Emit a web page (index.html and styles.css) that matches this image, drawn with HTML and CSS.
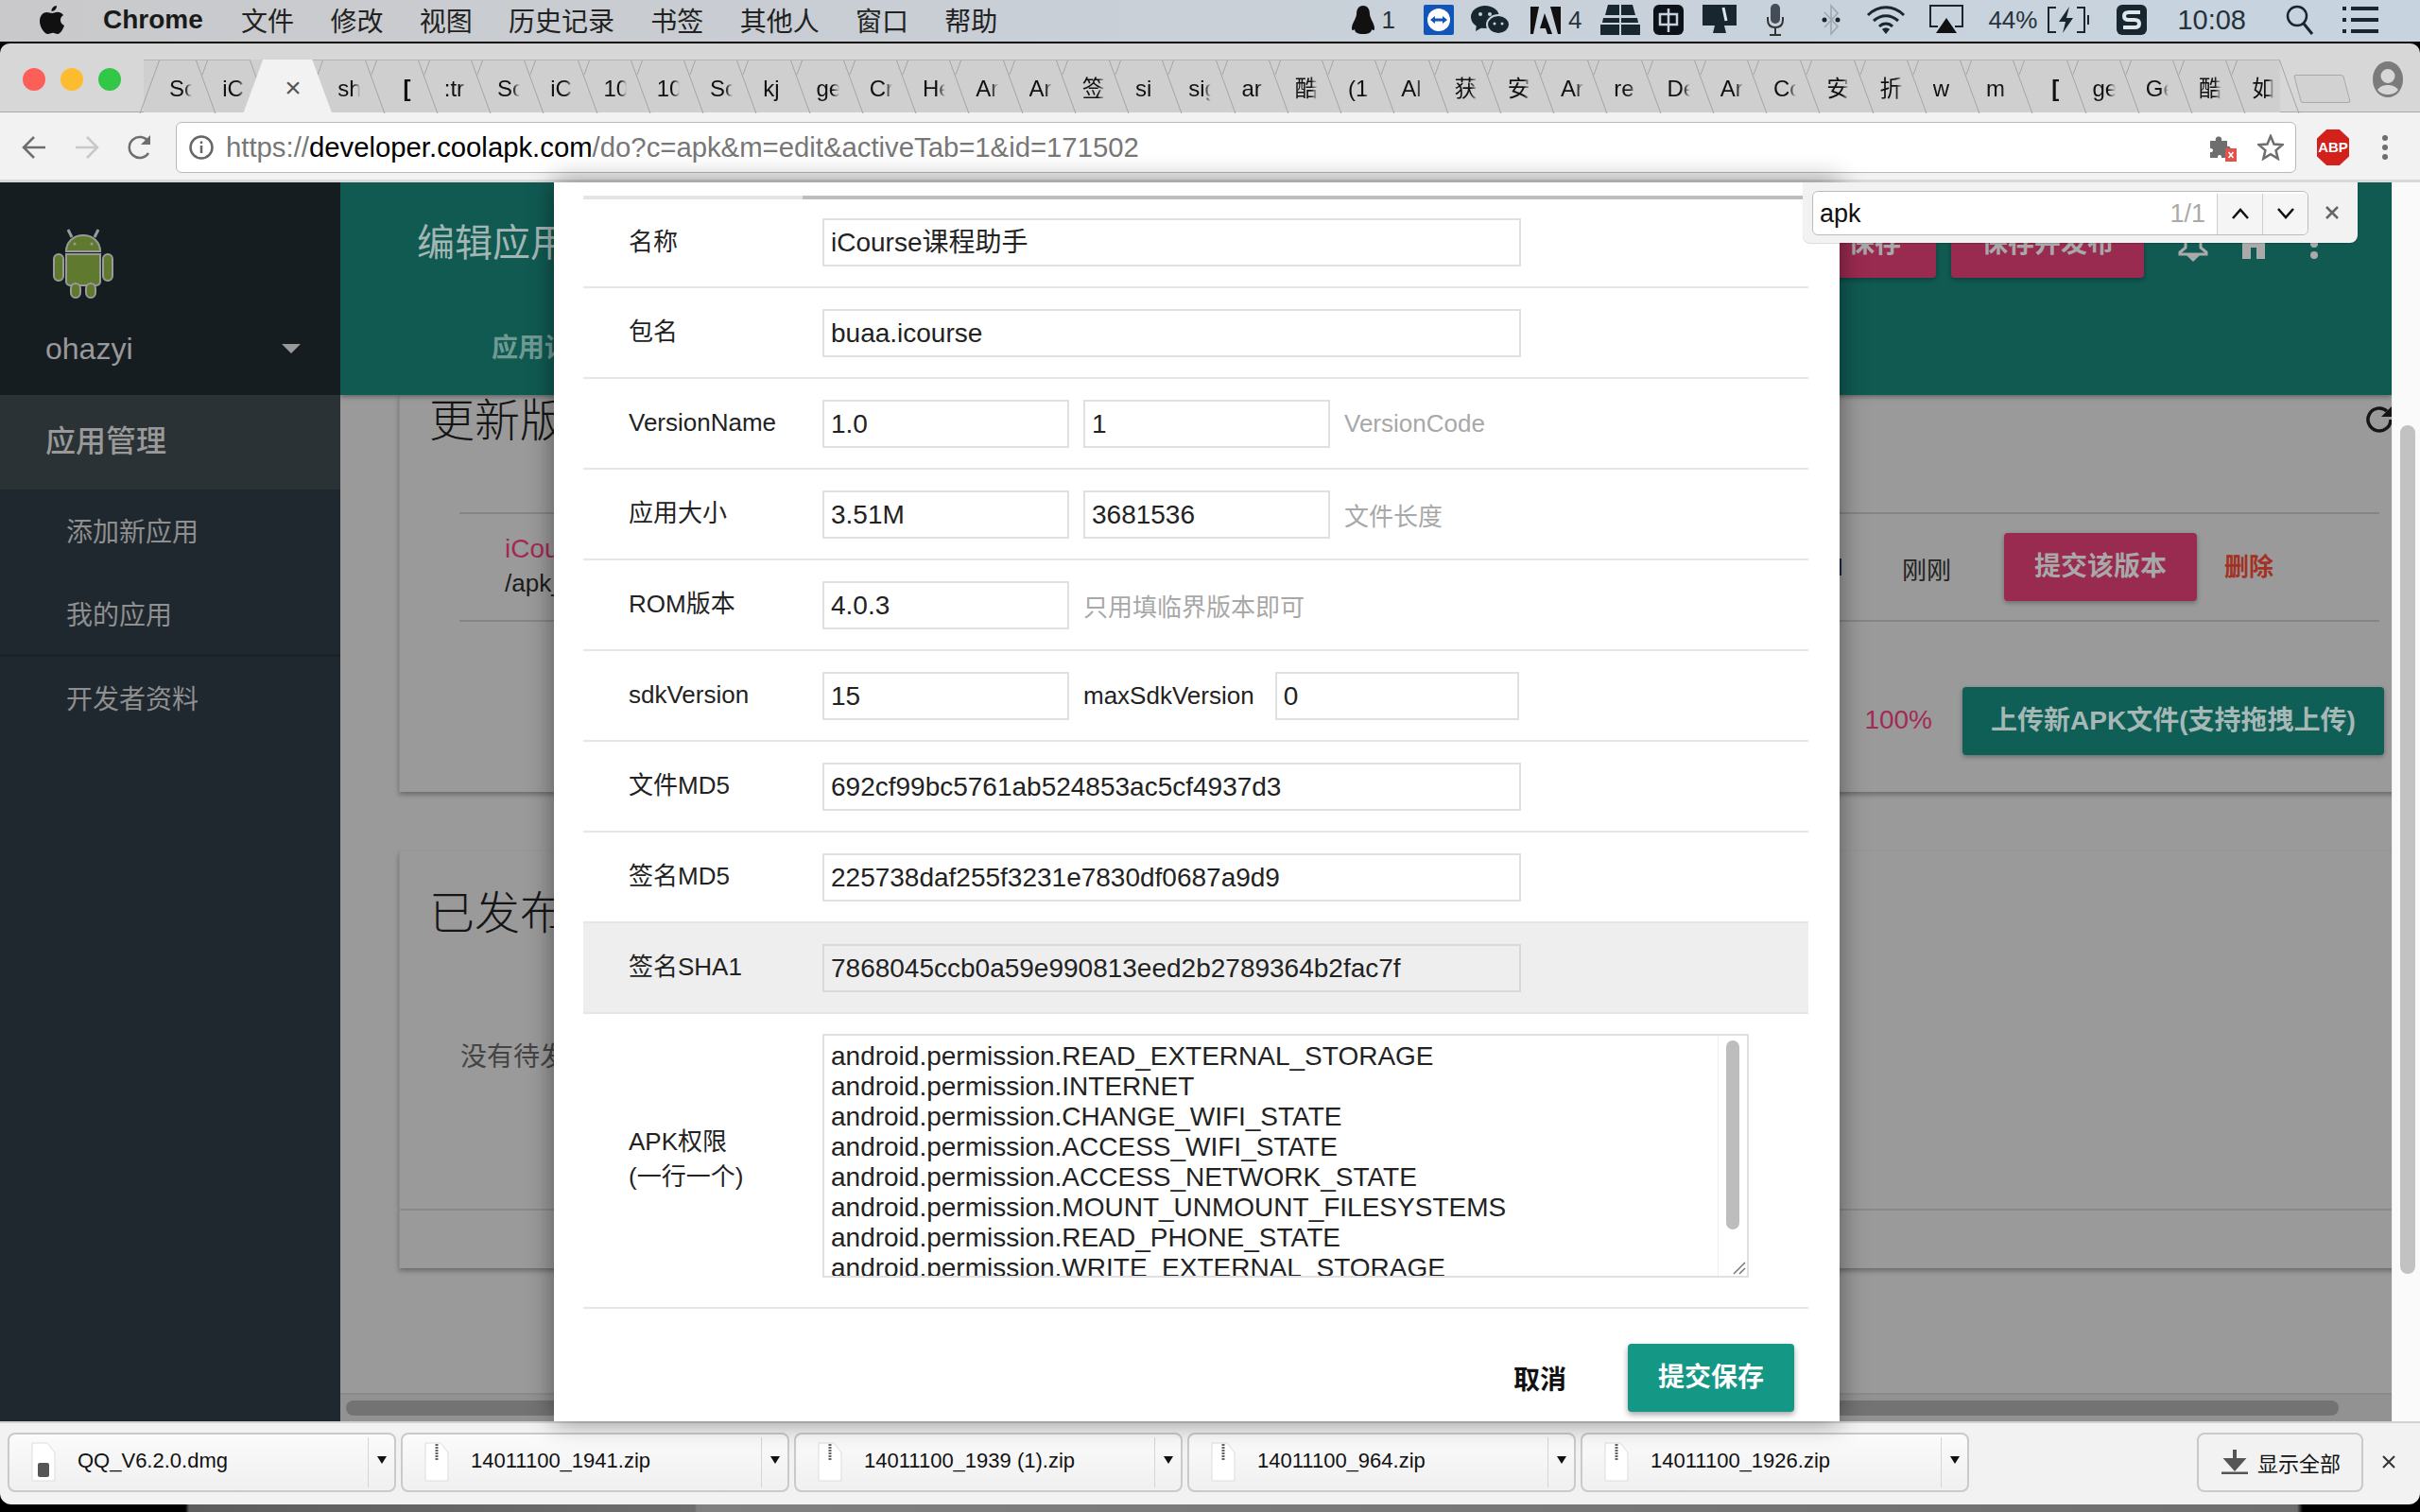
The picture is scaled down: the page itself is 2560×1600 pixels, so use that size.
FILE: index.html
```html
<!DOCTYPE html>
<html lang="zh-CN">
<head>
  <meta charset="UTF-8">
  <title>编辑应用</title>
  <link rel="stylesheet" href="styles.css">
</head>
<body>
  <!-- mac menu bar -->
  <div class="menubar">
    <svg class="apple" width="26" height="32" viewBox="0 0 26 32"><path d="M18 1c.3 3-2.500 6-5.500 6C12 4 15 1 18 1zM13 9c1.500 0 3-1.300 6-1.300 2 0 4.500 1 6 3.300-4.500 2.700-3.800 9 1 11-1 3-4 9-7 9-2 0-2.600-1.300-5-1.300S10.500 31 8.500 31C5 31 0 23.500 0 17.500 0 11 4 8 7.500 8 9.800 8 11.500 9 13 9z" fill="#111"/></svg>
    <span class="app-name">Chrome</span>
    <span class="menu">文件</span>
    <span class="menu">修改</span>
    <span class="menu">视图</span>
    <span class="menu">历史记录</span>
    <span class="menu">书签</span>
    <span class="menu">其他人</span>
    <span class="menu">窗口</span>
    <span class="menu">帮助</span>
    <div class="status">
      <svg width="26" height="32" viewBox="0 0 26 32"><path d="M13 1c5 0 7 4 7 9 0 4 5 10 5 15 0 3-2 2-3 1 0 3-3 5-9 5S4 29 4 26c-1 1-3 2-3-1 0-5 5-11 5-15 0-5 2-9 7-9z" fill="#111"/></svg>
      <span class="num g6">1</span>
      <svg class="g30" width="32" height="32" viewBox="0 0 32 32"><rect width="32" height="32" rx="2" fill="#1155bb"/><circle cx="16" cy="16" r="12" fill="#fff"/><path d="M7 16l5-4v2.500h8V12l5 4-5 4v-2.500h-8V20z" fill="#1155bb"/></svg>
      <svg class="g18" width="41" height="32" viewBox="0 0 41 32"><ellipse cx="15" cy="13" rx="15" ry="12" fill="#18262f"/><path d="M6 21l-1 7 7-4z" fill="#18262f"/><ellipse cx="29" cy="21" rx="12" ry="10" fill="#18262f" stroke="#c5d1dc" stroke-width="2"/><circle cx="10" cy="10" r="2" fill="#c5d1dc"/><circle cx="20" cy="10" r="2" fill="#c5d1dc"/><circle cx="25" cy="20" r="1.500" fill="#c5d1dc"/><circle cx="33" cy="20" r="1.500" fill="#c5d1dc"/></svg>
      <svg class="g22" width="32" height="30" viewBox="0 0 32 30"><path d="M0 1h9L3 30H0zM21 1h11v29h-3zM15 8l8 22h-5l-2-6h-6z" fill="#111"/></svg>
      <span class="num g8">4</span>
      <svg class="g20" width="42" height="32" viewBox="0 0 42 32"><path d="M8 0h12v11H5zM22 0h12l3 11H22zM3 14h17v5H2zM22 14h17l1 5H22zM0 21h20v11H0zM22 21h20v11H22z" fill="#18262f"/></svg>
      <svg class="g14" width="32" height="32" viewBox="0 0 32 32"><rect width="32" height="32" rx="6" fill="#0c1218"/><path d="M7 10h18v11H7zM16 4v25" fill="none" stroke="#c5d1dc" stroke-width="2.500"/></svg>
      <svg class="g20" width="36" height="32" viewBox="0 0 36 32"><path d="M0 0h36v22H0zM13 22h10l2 8H11z" fill="#18262f"/><path d="M22 3l3 14" stroke="#dfe6ec" stroke-width="3"/></svg>
      <svg class="g32" width="18" height="34" viewBox="0 0 18 34"><rect x="4" width="10" height="21" rx="5" fill="#444d55"/><path d="M1 14v3c0 5 3 8 8 8s8-3 8-8v-3M9 25v7M3 33h12" fill="none" stroke="#333" stroke-width="2"/></svg>
      <svg class="g40" width="20" height="34" viewBox="0 0 20 34"><path d="M3 9l14 15-7 8V2l7 8L3 25" fill="none" stroke="#9aa6b0" stroke-width="1.500"/><circle cx="3" cy="17" r="2.500" fill="#222"/><circle cx="17" cy="17" r="2.500" fill="#222"/></svg>
      <svg class="g27" width="42" height="32" viewBox="0 0 42 32"><path d="M2 11c11-11 27-11 38 0M8 17c8-7 18-7 26 0M14 23c4-4 10-4 14 0" fill="none" stroke="#18262f" stroke-width="3"/><path d="M21 31l-4-5c2-2 6-2 8 0z" fill="#18262f"/></svg>
      <svg class="g25" width="36" height="32" viewBox="0 0 36 32"><path d="M9 23H1V1h34v22h-8" fill="none" stroke="#18262f" stroke-width="2"/><path d="M18 14l11 16H7z" fill="#111"/></svg>
      <span class="num g26">44%</span>
      <svg class="g10" width="45" height="32" viewBox="0 0 45 32"><path d="M10 3H2v26h8M32 3h8v26h-8M44 11v10" fill="none" stroke="#18262f" stroke-width="2"/><path d="M24 2L13 18h7l-3 12 11-16h-7z" fill="#18262f"/></svg>
      <svg class="g29" width="32" height="32" viewBox="0 0 32 32"><rect width="32" height="32" rx="6" fill="#18262f"/><path d="M25 8H13q-5 0-5 4t5 4h6q5 0 5 4t-5 4H7" fill="none" stroke="#dfe6ec" stroke-width="4"/></svg>
      <span class="clock g32">10:08</span>
      <svg class="g42" width="30" height="32" viewBox="0 0 30 32"><circle cx="12" cy="12" r="10" fill="none" stroke="#18262f" stroke-width="2.500"/><path d="M19 20l9 11" stroke="#18262f" stroke-width="3"/></svg>
      <svg class="g30" width="38" height="28" viewBox="0 0 38 28"><path d="M0 2h4M9 2h29M0 14h4M9 14h29M0 26h4M9 26h29" stroke="#18262f" stroke-width="4"/></svg>
    </div>
  </div>

  <div class="window">
    <div class="tabstrip">
      <i class="light red"></i><i class="light yellow"></i><i class="light green"></i>
      <div class="tabs">
        <div class="tab first"><span>Sc</span></div>
        <div class="tab second"><span>iC</span></div>
        <div class="tab active"><span>×</span></div>
        <div class="tab"><span>sh</span></div>
        <div class="tab bar"><span>[</span></div>
        <div class="tab"><span>:tr</span></div>
        <div class="tab"><span>Sc</span></div>
        <div class="tab"><span>iC</span></div>
        <div class="tab"><span>10</span></div>
        <div class="tab"><span>10</span></div>
        <div class="tab"><span>Sc</span></div>
        <div class="tab"><span>kj</span></div>
        <div class="tab"><span>ge</span></div>
        <div class="tab"><span>Cr</span></div>
        <div class="tab"><span>He</span></div>
        <div class="tab"><span>Ar</span></div>
        <div class="tab"><span>Ar</span></div>
        <div class="tab"><span>签</span></div>
        <div class="tab"><span>si</span></div>
        <div class="tab"><span>sig</span></div>
        <div class="tab"><span>ar</span></div>
        <div class="tab"><span>酷</span></div>
        <div class="tab"><span>(1</span></div>
        <div class="tab"><span>Al</span></div>
        <div class="tab"><span>获</span></div>
        <div class="tab"><span>安</span></div>
        <div class="tab"><span>Ar</span></div>
        <div class="tab"><span>re</span></div>
        <div class="tab"><span>De</span></div>
        <div class="tab"><span>Ar</span></div>
        <div class="tab"><span>Cc</span></div>
        <div class="tab"><span>安</span></div>
        <div class="tab"><span>折</span></div>
        <div class="tab"><span>w</span></div>
        <div class="tab"><span>m</span></div>
        <div class="tab bar"><span>[</span></div>
        <div class="tab"><span>ge</span></div>
        <div class="tab"><span>Ge</span></div>
        <div class="tab"><span>酷</span></div>
        <div class="tab"><span>如</span></div>
      </div>
      <div class="newtab"></div>
      <svg class="profile" width="32" height="38" viewBox="0 0 32 38"><path fill-rule="evenodd" d="M16 0c9 0 16 8 16 19s-7 19-16 19S0 30 0 19 7 0 16 0zm0 8a7 7 0 0 0 0 15 7 7 0 0 0 0-15zM5 30c3 4 7 5 11 5s8-1 11-5c-3-4-7-5-11-5s-8 1-11 5z" fill="#7b7b7b"/></svg>
    </div>

    <div class="toolbar">
      <svg class="nav-back" width="26" height="26" viewBox="0 0 26 26"><path d="M25 13H3M13 2L2 13l11 11" fill="none" stroke="#6e6e6e" stroke-width="2.500"/></svg>
      <svg class="nav-forward" width="26" height="26" viewBox="0 0 26 26"><path d="M1 13h22M13 2l11 11-11 11" fill="none" stroke="#c8c8c8" stroke-width="2.500"/></svg>
      <svg class="nav-reload" width="28" height="30" viewBox="0 0 28 30"><path d="M23 21a11 11 0 1 1 0-12" fill="none" stroke="#6e6e6e" stroke-width="2.500"/><path d="M25 2v10H15z" fill="#6e6e6e"/></svg>
      <div class="urlbar">
        <svg class="info" width="26" height="26" viewBox="0 0 26 26"><circle cx="13" cy="13" r="11.500" fill="none" stroke="#666" stroke-width="2.500"/><path d="M13 11v8M13 6.500v2.500" stroke="#666" stroke-width="2.500"/></svg>
        <span class="url">https://<b>developer.coolapk.com</b>/do?c=apk&amp;m=edit&amp;activeTab=1&amp;id=171502</span>
        <svg class="puzzle" width="30" height="30" viewBox="0 0 30 30"><path d="M2 8h6c-2-6 8-6 6 0h6v6c5-2 5 8 0 6v6h-6c1-4-5-4-4 0H2v-6c4 1 4-5 0-4z" fill="#6e6e6e"/><rect x="18" y="16" width="12" height="14" fill="#e0534c"/><path d="M21.500 20l5 6M26.500 20l-5 6" stroke="#fff" stroke-width="1.500"/></svg>
        <svg class="star" width="28" height="28" viewBox="0 0 28 28"><path d="M14 2l3.500 8.500 9 .7-6.900 5.900 2.100 8.800L14 21.300l-7.700 4.600 2.100-8.800-6.900-5.900 9-.7z" fill="none" stroke="#6e6e6e" stroke-width="2.500"/></svg>
      </div>
      <div class="abp">ABP</div>
      <svg class="more" width="8" height="28" viewBox="0 0 8 28"><circle cx="4" cy="4" r="3" fill="#6e6e6e"/><circle cx="4" cy="14" r="3" fill="#6e6e6e"/><circle cx="4" cy="24" r="3" fill="#6e6e6e"/></svg>
    </div>

    <div class="viewport">
      <aside class="sidebar">
        <div class="profile-box">
          <svg class="droid" width="66" height="76" viewBox="0 0 66 76">
            <g fill="#5f7a2e" stroke="#9a9a9a" stroke-width="2">
              <path d="M15 26c0-10 8-17 18-17s18 7 18 17z"/>
              <path d="M15 29h36v29a4 4 0 0 1-4 4H19a4 4 0 0 1-4-4z"/>
              <rect x="2" y="29" width="10" height="28" rx="5"/>
              <rect x="54" y="29" width="10" height="28" rx="5"/>
              <rect x="20" y="60" width="10" height="15" rx="5"/>
              <rect x="36" y="60" width="10" height="15" rx="5"/>
            </g>
            <path d="M21 11l-4-8M45 11l4-8" stroke="#9a9a9a" stroke-width="3"/>
            <circle cx="24" cy="18" r="1.500" fill="#9a9a9a"/><circle cx="42" cy="18" r="1.500" fill="#9a9a9a"/>
          </svg>
          <div class="user"><span>ohazyi</span><i class="caret"></i></div>
        </div>
        <div class="nav-title">应用管理</div>
        <div class="nav-group">
          <div class="nav-item">添加新应用</div>
          <div class="nav-item">我的应用</div>
        </div>
        <div class="nav-group second-group">
          <div class="nav-item">开发者资料</div>
        </div>
      </aside>

      <div class="page">
        <header class="head">
          <div class="head-top">
            <h1>编辑应用</h1>
            <div class="head-actions">
              <div class="btn-pink short">保存</div>
              <div class="btn-pink wide">保存并发布</div>
              <svg class="head-icon" width="32" height="40" viewBox="0 0 32 40"><path d="M8 24V10h16v14l6 5v2H2v-2zM12 33h8l-4 4z" fill="none" stroke="#aaa" stroke-width="3"/></svg>
              <svg class="head-icon" width="32" height="40" viewBox="0 0 32 40"><path d="M16 2L0 16h4v20h9V24h6v12h9V16h4z" fill="#aaa"/></svg>
              <svg class="head-icon" width="10" height="40" viewBox="0 0 10 40"><circle cx="5" cy="8" r="4" fill="#aaa"/><circle cx="5" cy="20" r="4" fill="#aaa"/><circle cx="5" cy="32" r="4" fill="#aaa"/></svg>
            </div>
          </div>
          <div class="head-tab">应用详情</div>
        </header>

        <div class="content">
          <svg class="refresh" width="32" height="32" viewBox="0 0 32 32"><path d="M28 16a12 12 0 1 1-4-9" fill="none" stroke="#151515" stroke-width="3.500"/><path d="M29 2v11H18z" fill="#151515"/></svg>
          <section class="card first-card">
            <h2>更新版本</h2>
            <div class="ver-row">
              <div class="ver-name">
                <div class="pink">iCourse课程助手</div>
                <div>/apk_upload/icourse.apk</div>
              </div>
              <span class="ver-size">3.51M</span>
              <span class="ver-time">刚刚</span>
              <div class="btn-pink submit">提交该版本</div>
              <span class="ver-del">删除</span>
            </div>
            <div class="upload-row">
              <span class="pink">100%</span>
              <div class="btn-upload">上传新APK文件(支持拖拽上传)</div>
            </div>
          </section>
          <section class="card second-card">
            <h2>已发布版本</h2>
            <p class="empty">没有待发布的版本</p>
            <div class="card-foot"></div>
          </section>
        </div>

        <div class="hscroll"><div class="hthumb"></div></div>
      </div>

      <div class="vscroll"><div class="vthumb"></div></div>

      <!-- dialog over the page -->
      <div class="modal">
        <div class="modal-bar"></div>
        <div class="row">
          <label>名称</label>
          <div class="field">iCourse课程助手</div>
        </div>
        <div class="row">
          <label>包名</label>
          <div class="field">buaa.icourse</div>
        </div>
        <div class="row">
          <label>VersionName</label>
          <div class="field half">1.0</div>
          <div class="field half">1</div>
          <span class="hint">VersionCode</span>
        </div>
        <div class="row">
          <label>应用大小</label>
          <div class="field half">3.51M</div>
          <div class="field half">3681536</div>
          <span class="hint">文件长度</span>
        </div>
        <div class="row">
          <label>ROM版本</label>
          <div class="field half">4.0.3</div>
          <span class="hint">只用填临界版本即可</span>
        </div>
        <div class="row">
          <label>sdkVersion</label>
          <div class="field half">15</div>
          <span class="inline-label">maxSdkVersion</span>
          <div class="field half narrow">0</div>
        </div>
        <div class="row">
          <label>文件MD5</label>
          <div class="field">692cf99bc5761ab524853ac5cf4937d3</div>
        </div>
        <div class="row">
          <label>签名MD5</label>
          <div class="field">225738daf255f3231e7830df0687a9d9</div>
        </div>
        <div class="row disabled">
          <label>签名SHA1</label>
          <div class="field">7868045ccb0a59e990813eed2b2789364b2fac7f</div>
        </div>
        <div class="row perms">
          <label>APK权限<br>(一行一个)</label>
          <div class="textarea">
            <div class="lines">
              <div>android.permission.READ_EXTERNAL_STORAGE</div>
              <div>android.permission.INTERNET</div>
              <div>android.permission.CHANGE_WIFI_STATE</div>
              <div>android.permission.ACCESS_WIFI_STATE</div>
              <div>android.permission.ACCESS_NETWORK_STATE</div>
              <div>android.permission.MOUNT_UNMOUNT_FILESYSTEMS</div>
              <div>android.permission.READ_PHONE_STATE</div>
              <div>android.permission.WRITE_EXTERNAL_STORAGE</div>
            </div>
            <div class="ta-scroll">
              <div class="ta-thumb"></div>
              <svg class="ta-grip" width="14" height="14" viewBox="0 0 14 14"><path d="M1 13L13 1M7 13l6-6" stroke="#777" stroke-width="1.500"/></svg>
            </div>
          </div>
        </div>
        <div class="modal-foot">
          <span class="cancel">取消</span>
          <div class="btn-save">提交保存</div>
        </div>
      </div>

      <!-- chrome find bar -->
      <div class="findbar">
        <div class="find-box">
          <span class="find-text">apk</span>
          <span class="find-count">1/1</span>
          <div class="find-btn">
            <svg width="20" height="14" viewBox="0 0 20 14"><path d="M2 12l8-9 8 9" fill="none" stroke="#111" stroke-width="2.500"/></svg>
          </div>
          <div class="find-btn">
            <svg width="20" height="14" viewBox="0 0 20 14"><path d="M2 2l8 9 8-9" fill="none" stroke="#111" stroke-width="2.500"/></svg>
          </div>
        </div>
        <svg class="find-close" width="16" height="16" viewBox="0 0 16 16"><path d="M2 2l12 12M14 2L2 14" stroke="#666" stroke-width="2.500"/></svg>
      </div>
    </div>

    <div class="downloads">
      <div class="dl">
        <svg class="file" width="26" height="42" viewBox="0 0 26 42"><path d="M1 1h16l8 10v30H1z" fill="#fff" stroke="#ddd"/><rect x="7" y="22" width="12" height="15" rx="2" fill="#555"/></svg>
        <span class="dl-name">QQ_V6.2.0.dmg</span>
        <i class="dl-sep"></i><i class="dl-caret"></i>
      </div>
      <div class="dl">
        <svg class="file" width="26" height="42" viewBox="0 0 26 42"><path d="M1 1h16l8 10v30H1z" fill="#fff" stroke="#ddd"/><path d="M13 2v18" stroke="#666" stroke-width="3" stroke-dasharray="2 1"/></svg>
        <span class="dl-name">14011100_1941.zip</span>
        <i class="dl-sep"></i><i class="dl-caret"></i>
      </div>
      <div class="dl">
        <svg class="file" width="26" height="42" viewBox="0 0 26 42"><path d="M1 1h16l8 10v30H1z" fill="#fff" stroke="#ddd"/><path d="M13 2v18" stroke="#666" stroke-width="3" stroke-dasharray="2 1"/></svg>
        <span class="dl-name">14011100_1939 (1).zip</span>
        <i class="dl-sep"></i><i class="dl-caret"></i>
      </div>
      <div class="dl">
        <svg class="file" width="26" height="42" viewBox="0 0 26 42"><path d="M1 1h16l8 10v30H1z" fill="#fff" stroke="#ddd"/><path d="M13 2v18" stroke="#666" stroke-width="3" stroke-dasharray="2 1"/></svg>
        <span class="dl-name">14011100_964.zip</span>
        <i class="dl-sep"></i><i class="dl-caret"></i>
      </div>
      <div class="dl">
        <svg class="file" width="26" height="42" viewBox="0 0 26 42"><path d="M1 1h16l8 10v30H1z" fill="#fff" stroke="#ddd"/><path d="M13 2v18" stroke="#666" stroke-width="3" stroke-dasharray="2 1"/></svg>
        <span class="dl-name">14011100_1926.zip</span>
        <i class="dl-sep"></i><i class="dl-caret"></i>
      </div>
      <div class="show-all">
        <svg width="28" height="26" viewBox="0 0 28 26"><path d="M14 0v14M6 11h16l-8 9z" stroke="#555" stroke-width="4" fill="#555"/><path d="M0 25h28" stroke="#555" stroke-width="3"/></svg>
        <span>显示全部</span>
      </div>
      <svg class="dl-close" width="14" height="14" viewBox="0 0 14 14"><path d="M1 1l12 12M13 1L1 13" stroke="#333" stroke-width="2"/></svg>
    </div>
  </div>
  <div class="desk"></div>
</body>
</html>
```

FILE: styles.css
```css
* {
  box-sizing: border-box;
}

html, body {
  margin: 0;
  height: 100%;
}

body {
  width: 2560px;
  height: 1600px;
  overflow: hidden;
  background: #000;
  font-family: "Liberation Sans", "Noto Sans CJK SC", sans-serif;
  color: #222;
}

h1, h2, p {
  margin: 0;
  font-weight: normal;
}

/* menu bar */
.menubar {
  height: 46px;
  display: flex;
  align-items: center;
  padding: 0 44px 2px 0;
  border-bottom: 2px solid #0b0b0b;
  background: linear-gradient(to right, #c9c9cb, #c9d0d8 50%, #c7d4e0);
  font-size: 28px;
}

.apple {
  margin-left: 42px;
}

.app-name {
  margin: 0 2px 0 41px;
  font-weight: bold;
  color: #1a1a1a;
}

.menu {
  margin-left: 38.300px;
  color: #222;
}

.status {
  margin-left: auto;
  display: flex;
  align-items: center;
}

.num, .clock {
  color: #26323b;
  font-size: 26px;
}

.clock {
  font-size: 29px;
}

.g6 { margin-left: 6px; }
.g8 { margin-left: 8px; }
.g10 { margin-left: 10px; }
.g14 { margin-left: 14px; }
.g18 { margin-left: 18px; }
.g20 { margin-left: 20px; }
.g22 { margin-left: 22px; }
.g25 { margin-left: 25px; }
.g26 { margin-left: 26px; }
.g27 { margin-left: 27px; }
.g29 { margin-left: 29px; }
.g30 { margin-left: 30px; }
.g32 { margin-left: 32px; }
.g40 { margin-left: 40px; }
.g42 { margin-left: 42px; }

/* browser window */
.window {
  height: 1546px;
  display: flex;
  flex-direction: column;
  border-radius: 10px 10px 12px 12px;
  overflow: hidden;
}

.tabstrip {
  height: 73px;
  flex: none;
  display: flex;
  padding: 17px 0 0 24px;
  background: #d7d7d7;
  border-bottom: 1px solid #a9a9a9;
}

.light {
  width: 24px;
  height: 24px;
  margin: 9px 16px 0 0;
  border-radius: 50%;
}

.red { background: #fc5f57; }
.yellow { background: #fdbc2f; }
.green { background: #33c748; }

.tabs {
  display: flex;
  margin-left: 8px;
  height: 56px;
  background: #cfcfcf;
}

.tab {
  position: relative;
  width: 56.250px;
  height: 56px;
  padding: 16px 0 0 27px;
  font-size: 24px;
  line-height: 28px;
  color: #111;
  border-top: 1px solid #b4b4b4;
}

.tab span {
  display: block;
  width: 24px;
  overflow: hidden;
  white-space: nowrap;
  -webkit-mask-image: linear-gradient(to right, #000 70%, transparent);
}

.tab.bar {
  padding-left: 40px;
  font-weight: bold;
}

.tab::after {
  content: "";
  position: absolute;
  top: 0;
  right: 0;
  width: 1px;
  height: 56px;
  background: #a4a4a4;
  transform: skewX(20deg);
  transform-origin: top;
}

.tab::before {
  content: "";
  position: absolute;
  top: 0;
  left: 11px;
  width: 1px;
  height: 15px;
  background: #a4a4a4;
  transform: skewX(-20deg);
  transform-origin: top;
}

.tab.first::before {
  left: 16px;
  height: 56px;
}

.tab.second {
  width: 57px;
}

.tab.active {
  width: 65px;
  z-index: 1;
  border-top: 0;
  color: #555;
  padding: 16px 0 0 36px;
  font-size: 30px;
}

.tab.active::before {
  left: -8px;
  width: 94px;
  height: 57px;
  background: #f2f2f2;
  transform: none;
  clip-path: polygon(0 100%, 21px 0, 73px 0, 94px 100%);
}

.tab.active::after {
  display: none;
}

.tab.active span {
  position: relative;
  -webkit-mask-image: none;
}

.newtab {
  width: 53px;
  height: 30px;
  margin: 16px 0 0 18px;
  background: #d2d2d2;
  border: 1px solid #a9a9a9;
  border-radius: 3px;
  transform: skewX(15deg);
}

.profile {
  margin: 2px 0 0 27px;
}

.toolbar {
  height: 74px;
  flex: none;
  display: flex;
  align-items: center;
  padding: 3px 32px 0 23px;
  background: #f2f2f2;
  border-bottom: 3px solid #d9d9d9;
}

.nav-forward {
  margin-left: 30px;
}

.nav-reload {
  margin-left: 29px;
}

.urlbar {
  width: 2243px;
  height: 54px;
  margin-left: 24px;
  display: flex;
  align-items: center;
  padding: 0 12px 0 13px;
  background: #fff;
  border: 1px solid #b8b8b8;
  border-radius: 6px;
}

.url {
  margin-left: 13px;
  font-size: 29.300px;
  color: #777;
}

.url b {
  font-weight: normal;
  color: #000;
}

.puzzle {
  margin-left: auto;
}

.star {
  margin-left: 22px;
}

.abp {
  width: 34px;
  height: 38px;
  margin-left: 22px;
  line-height: 38px;
  text-align: center;
  font-size: 15px;
  font-weight: bold;
  color: #fff;
  background: #d2201b;
  clip-path: polygon(30% 0, 70% 0, 100% 25%, 100% 75%, 70% 100%, 30% 100%, 0 75%, 0 25%);
}

.more {
  margin-left: 34px;
}

/* page under the dialog */
.viewport {
  position: relative;
  height: 1311px;
  flex: none;
  display: flex;
  background: #9a9a9a;
}

.sidebar {
  width: 360px;
  flex: none;
  background: #20282f;
  color: #999;
}

.profile-box {
  height: 225px;
  padding: 47px 0 0 55px;
  background: #161d21;
}

.droid {
  display: block;
}

.user {
  display: flex;
  align-items: center;
  margin: 34px 0 0 -7px;
  font-size: 32px;
  line-height: 38px;
}

.caret {
  width: 0;
  height: 0;
  margin-left: 157px;
  border: 10px solid transparent;
  border-top: 10px solid #999;
  border-bottom: 0;
}

.nav-title {
  height: 100px;
  padding-left: 48px;
  line-height: 98px;
  font-size: 32px;
  font-weight: 500;
  background: #2b3236;
}

.nav-group {
  height: 177px;
  padding: 2px 0 0 70px;
  font-size: 28px;
  color: #8f8f8f;
  border-bottom: 3px solid #1b2228;
}

.nav-group.second-group {
  border-bottom: 0;
}

.nav-item {
  height: 88px;
  line-height: 88px;
}

.page {
  width: 2170px;
  flex: none;
  display: flex;
  flex-direction: column;
  overflow: hidden;
}

.head {
  position: relative;
  z-index: 2;
  height: 225px;
  flex: none;
  padding: 29px 0 0 81px;
  background: #105a52;
  box-shadow: 0 2px 5px rgba(0, 0, 0, .35);
}

.head-top {
  display: flex;
  align-items: center;
  height: 72px;
}

.head-top h1 {
  margin-top: -8px;
  font-size: 40px;
  color: #a3b6b3;
}

.head-actions {
  margin-left: auto;
  display: flex;
  align-items: center;
}

.btn-pink {
  height: 72px;
  line-height: 72px;
  text-align: center;
  font-size: 28px;
  font-weight: bold;
  color: #a8a8a8;
  background: #992a50;
  border-radius: 4px;
  box-shadow: 0 2px 5px rgba(0, 0, 0, .3);
}

.btn-pink.short {
  width: 130px;
}

.btn-pink.wide {
  width: 204px;
  margin-left: 16px;
}

.head-icon {
  margin-left: 36px;
}

.head-icon + .head-icon {
  margin-left: 32px;
}

.head-icon + .head-icon + .head-icon {
  margin: 0 77px 0 43px;
}

.head-tab {
  margin: 52px 0 0 79px;
  font-size: 28px;
  font-weight: bold;
  color: #6f9a94;
}

.content {
  position: relative;
  flex: 1;
  min-height: 0;
  padding-left: 62px;
  color: #222;
}

.refresh {
  position: absolute;
  top: 10px;
  left: 2141px;
}

.card {
  width: 2120px;
  background: #9a9a9a;
  border-left: 1px solid #8e8e8e;
  box-shadow: 0 3px 5px rgba(0, 0, 0, .3);
}

.card h2 {
  height: 56px;
  padding-left: 31px;
  font-size: 48px;
  font-weight: 300;
  line-height: 56px;
  color: #151515;
}

.first-card {
  height: 420px;
}

.ver-row {
  height: 116px;
  margin: 68px 25px 0 63px;
  padding-left: 48px;
  display: flex;
  align-items: center;
  font-size: 26px;
  border-top: 2px solid #858585;
  border-bottom: 2px solid #858585;
}

.ver-name {
  flex: 1;
  margin-top: -2px;
  line-height: 37px;
  font-size: 26px;
  color: #1a1a1a;
  white-space: nowrap;
}

.pink {
  color: #a32a55;
  font-size: 28px;
}

.ver-size {
  margin-right: 62px;
}

.ver-time {
  color: #222;
  margin-top: 2px;
}

.btn-pink.submit {
  width: 204px;
  margin-left: 56px;
}

.ver-del {
  margin: -5px 112px 0 29px;
  font-weight: bold;
  color: #a33124;
}

.upload-row {
  display: flex;
  align-items: center;
  justify-content: flex-end;
  margin: 69px 20px 0 0;
  gap: 32px;
}

.upload-row .pink {
  margin-top: -3px;
}

.btn-upload {
  width: 446px;
  height: 72px;
  line-height: 72px;
  text-align: center;
  font-size: 28px;
  font-weight: bold;
  color: #a5b8b5;
  background: #105f57;
  border-radius: 4px;
  box-shadow: 0 2px 5px rgba(0, 0, 0, .3);
}

.second-card {
  height: 441px;
  margin-top: 63px;
  padding-top: 38px;
}

.empty {
  margin: 106px 0 0 64px;
  font-size: 28px;
  line-height: 36px;
  color: #444;
}

.card-foot {
  margin-top: 142px;
  border-top: 2px solid #8a8a8a;
}

.hscroll {
  height: 30px;
  flex: none;
  padding: 6px 0 0 6px;
  background: #929292;
  border-top: 2px solid #8a8a8a;
}

.hthumb {
  width: 2108px;
  height: 16px;
  background: #737373;
  border-radius: 8px;
}

.vscroll {
  width: 30px;
  flex: none;
  padding: 257px 0 0 8px;
  background: #fafafa;
  border-left: 1px solid #eee;
}

.vthumb {
  width: 16px;
  height: 898px;
  background: #c2c2c2;
  border-radius: 8px;
}

/* dialog */
.modal {
  position: absolute;
  z-index: 3;
  top: 0;
  left: 586px;
  bottom: 0;
  width: 1360px;
  padding: 14px 33px 0 31px;
  overflow: hidden;
  background: #fff;
  box-shadow: 0 0 26px rgba(0, 0, 0, .45);
  font-size: 28px;
  color: #222;
}

.modal-bar {
  height: 4px;
  background: linear-gradient(to right, #e5e5e5 232px, #bdbdbd 232px);
}

.row {
  height: 96px;
  display: flex;
  align-items: center;
  gap: 15px;
  padding-left: 48px;
  border-bottom: 2px solid #e6e6e6;
}

.row:nth-child(2) {
  height: 94px;
}

.row:nth-child(2) .field {
  margin-top: -2px;
}

.row label {
  width: 190px;
  margin-top: -2px;
  font-size: 26px;
  line-height: 37px;
}

.field {
  width: 739px;
  height: 51px;
  padding-left: 7px;
  line-height: 48px;
  border: 2px solid #e0e0e0;
  white-space: nowrap;
}

.field.half {
  width: 261px;
}

.field.half.narrow {
  width: 258px;
}

.hint {
  font-size: 26px;
  color: #a8a8a8;
}

.row .inline-label {
  font-size: 26px;
  margin-right: 7px;
}

.row.disabled {
  background: #eee;
}

.row.disabled .field {
  border-color: #d8d8d8;
}

.row.perms {
  height: 312px;
}

.textarea {
  position: relative;
  align-self: flex-start;
  width: 980px;
  height: 258px;
  margin-top: 21px;
  padding-left: 7px;
  overflow: hidden;
  border: 2px solid #e0e0e0;
}

.lines {
  padding-top: 6px;
  line-height: 32px;
  white-space: nowrap;
}

.ta-scroll {
  position: absolute;
  top: 0;
  right: 0;
  bottom: 0;
  width: 31px;
  background: #fff;
  border-left: 1px solid #eee;
}

.ta-thumb {
  width: 14px;
  height: 200px;
  margin: 5px 0 0 8px;
  background: #bdbdbd;
  border-radius: 7px;
}

.ta-grip {
  position: absolute;
  right: 1px;
  bottom: 1px;
}

.modal-foot {
  display: flex;
  align-items: center;
  justify-content: flex-end;
  height: 72px;
  margin: 37px 15px 0 0;
  gap: 65px;
}

.cancel {
  font-weight: bold;
  color: #111;
}

.btn-save {
  width: 176px;
  height: 72px;
  line-height: 72px;
  text-align: center;
  font-weight: bold;
  color: #fff;
  background: #159786;
  border-radius: 4px;
  box-shadow: 0 3px 6px rgba(0, 0, 0, .35);
}

/* find bar */
.findbar {
  position: absolute;
  z-index: 5;
  top: 0;
  left: 1907px;
  width: 587px;
  height: 64px;
  display: flex;
  align-items: center;
  padding-left: 10px;
  background: #f2f2f2;
  border-radius: 0 0 8px 8px;
  box-shadow: 0 1px 1px rgba(0, 0, 0, .15);
}

.find-box {
  width: 525px;
  height: 47px;
  display: flex;
  align-items: center;
  padding: 2px 0 0 7px;
  background: #fff;
  border: 1px solid #bbb;
  border-radius: 6px;
  overflow: hidden;
  font-size: 27px;
  color: #111;
}

.find-count {
  margin-left: auto;
  padding-right: 12px;
  color: #aaa;
}

.find-btn {
  width: 48px;
  height: 100%;
  display: flex;
  align-items: center;
  justify-content: center;
  background: #f5f5f5;
  border-left: 1px solid #ccc;
}

.find-close {
  margin-left: 17px;
}

/* download shelf */
.downloads {
  height: 88px;
  flex: none;
  display: flex;
  align-items: center;
  padding: 0 0 4px 8px;
  background: #f2f2f2;
  border-top: 2px solid #d2d2d2;
}

.dl {
  position: relative;
  width: 411px;
  height: 63px;
  margin-right: 5px;
  display: flex;
  align-items: center;
  padding-left: 23px;
  background: linear-gradient(#fbfbfb, #f0f0f0);
  border: 2px solid #cacaca;
  border-radius: 8px;
  font-size: 22px;
  color: #111;
}

.file {
  flex: none;
}

.dl-name {
  margin: -2px 0 0 23px;
  white-space: nowrap;
}

.dl-sep {
  position: absolute;
  top: 3px;
  bottom: 3px;
  right: 27px;
  width: 1px;
  background: #d6d6d6;
}

.dl-caret {
  position: absolute;
  top: 23px;
  right: 8px;
  border: 5px solid transparent;
  border-top: 8px solid #111;
  border-bottom: 0;
}

.show-all {
  width: 176px;
  height: 63px;
  margin-left: 236px;
  display: flex;
  align-items: center;
  gap: 10px;
  padding-left: 24px;
  border: 2px solid #cacaca;
  border-radius: 8px;
  font-size: 22px;
  color: #111;
}

.dl-close {
  margin-left: 20px;
}

.desk {
  height: 8px;
  background: linear-gradient(to right, #000 196px, #5c5c5c 200px, #6e6e6e 735px, #808080 737px, #6e6e6e 2430px, #000 2436px);
}
```
